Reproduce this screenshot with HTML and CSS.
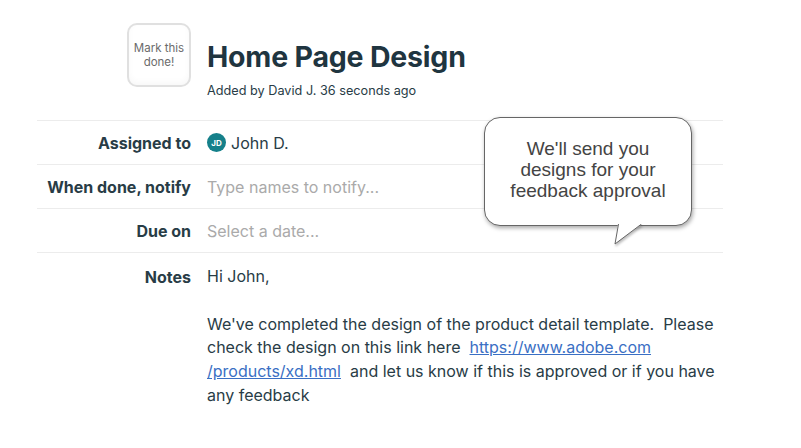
FILE: index.html
```html
<!DOCTYPE html>
<html lang="en">
<head>
    <meta charset="UTF-8">
    <meta name="viewport" content="width=device-width, initial-scale=1.0">
    <title>Home Page Design</title>
    <link rel="stylesheet" href="styles.css">
</head>
<body>
    <div class="todo">
        <div class="todo-header">
            <div class="todo-check">
                <button class="mark-done" type="button">Mark this done!</button>
            </div>
            <div class="todo-title">
                <h1>Home Page Design</h1>
                <p class="meta">Added by David J. 36 seconds ago</p>
            </div>
        </div>

        <div class="fields">
            <div class="field">
                <div class="label">Assigned to</div>
                <div class="value">
                    <span class="avatar">JD</span>
                    <span>John D.</span>
                </div>
            </div>
            <div class="field">
                <div class="label">When done, notify</div>
                <div class="value placeholder">Type names to notify...</div>
            </div>
            <div class="field">
                <div class="label">Due on</div>
                <div class="value placeholder">Select a date...</div>
            </div>
            <div class="field notes">
                <div class="label">Notes</div>
                <div class="value">
                    <p>Hi John,</p>
                    <p>We've completed the design of the product detail template.&nbsp; Please check the design on this link here&nbsp; <a href="#">https://www.adobe.com<br>/products/xd.html</a>&nbsp; and let us know if this is approved or if you have any feedback</p>
                </div>
            </div>
        </div>

        <div class="bubble">
            We'll send you<br>designs for your<br>feedback approval
            <svg class="bubble-tail" width="30" height="23" viewBox="0 0 30 23">
                <path d="M4 0 L0.5 20 L28 0 Z" fill="#fff"/>
                <path d="M4.5 0 L1 20 L27.5 0" fill="none" stroke="#666" stroke-width="1"/>
            </svg>
        </div>
    </div>
</body>
</html>
```

FILE: styles.css
```css
body {
    margin: 0;
    font-family: Inter, "Noto Sans", sans-serif;
    color: #283c46;
    background-color: #fff;
}
.todo {
    position: relative;
    width: 686px;
    margin-left: 37px;
    padding-top: 23px;
}
.todo-header {
    display: flex;
    gap: 16px;
    padding-bottom: 22px;
}
.todo-check {
    width: 154px;
    display: flex;
    justify-content: flex-end;
}
.mark-done {
    width: 64px;
    height: 64px;
    border: 2px solid #e0e0e0;
    border-radius: 10px;
    background-color: #fff;
    color: #6b6b6b;
    font-family: inherit;
    font-size: 11.5px;
    line-height: 14px;
    padding: 0 4px;
    box-shadow: inset 0 -3px 6px rgba(0, 0, 0, 0.03);
}
.todo-title h1 {
    margin: 17px 0 0;
    font-size: 28.5px;
    line-height: 34px;
    font-weight: 700;
    color: #1f3540;
    letter-spacing: -0.2px;
}
.meta {
    margin: 9px 0 0;
    font-size: 12.7px;
    color: #283c46;
}
.field {
    display: flex;
    gap: 16px;
    border-top: 1px solid #ececec;
    height: 43px;
    align-items: center;
}
.label {
    width: 154px;
    flex-shrink: 0;
    text-align: right;
    font-weight: 700;
    font-size: 16px;
}
.value {
    font-size: 16px;
    display: flex;
    align-items: center;
    gap: 5px;
}
.placeholder {
    color: #aaa;
}
.avatar {
    width: 19px;
    height: 19px;
    border-radius: 50%;
    background-color: #15808a;
    color: #fff;
    font-size: 8px;
    font-weight: 700;
    display: inline-flex;
    align-items: center;
    justify-content: center;
}
.notes {
    height: auto;
    align-items: flex-start;
    padding-top: 12px;
}
.notes .label {
    line-height: 24px;
}
.notes .value {
    display: block;
    width: 516px;
    line-height: 23.7px;
}
.notes p {
    margin: 0 0 24px;
}
.notes a {
    color: #3a6fc4;
}
.bubble {
    position: absolute;
    left: 447px;
    top: 117px;
    width: 208px;
    height: 109px;
    border: 1px solid #666;
    border-radius: 16px;
    background-color: #fff;
    box-shadow: 1px 2px 4px rgba(0, 0, 0, 0.35);
    font-family: "Liberation Sans", Arial, sans-serif;
    font-size: 19px;
    line-height: 21px;
    color: #444;
    text-align: center;
    box-sizing: border-box;
    padding-top: 20px;
}
.bubble-tail {
    position: absolute;
    left: 129px;
    top: 100%;
    margin-top: -1px;
    filter: drop-shadow(1px 2px 1px rgba(0, 0, 0, 0.25));
}
```
